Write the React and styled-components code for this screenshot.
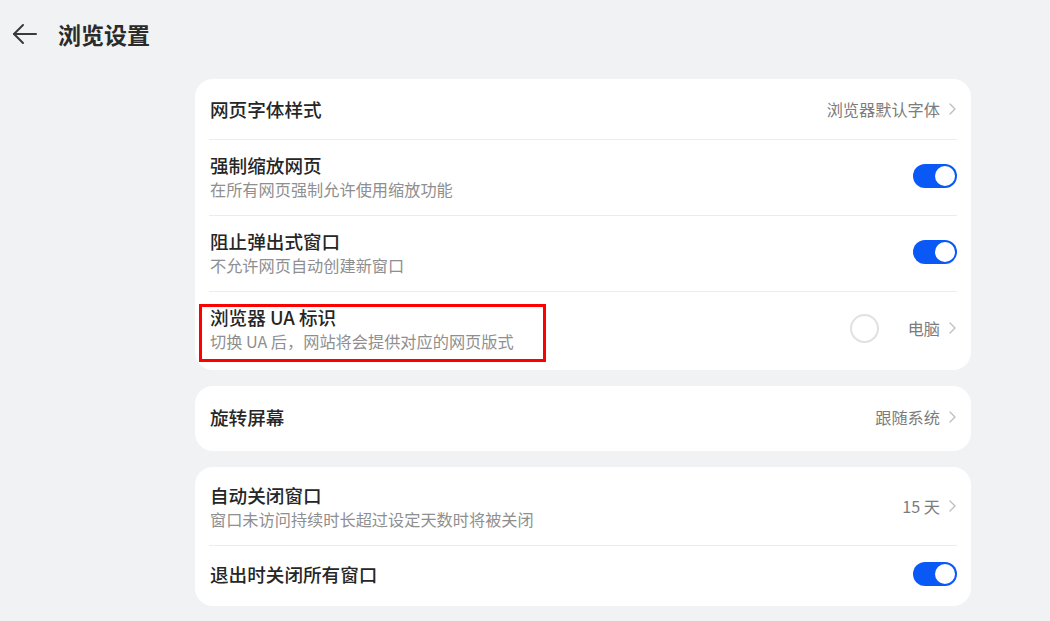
import React from "react";
import styled, { createGlobalStyle } from "styled-components";

const Global = createGlobalStyle`
  html, body { margin: 0; padding: 0; background: #f1f2f4; }
  body { font-family: "Noto Sans CJK SC", "Noto Sans", sans-serif; -webkit-font-smoothing: antialiased; }
`;

const Page = styled.div`
  width: 1050px;
  height: 621px;
  background: #f1f2f4;
  overflow: hidden;
`;

const Header = styled.div`
  display: flex;
  align-items: center;
  height: 68px;
  padding-left: 12px;
  gap: 20px;
`;

const BackBtn = styled.div`
  width: 26px;
  height: 26px;
  display: flex;
  align-items: center;
  justify-content: center;
  color: #3a3a3a;
`;

const Title = styled.h1`
  margin: 0;
  font-size: 23px;
  font-weight: 700;
  color: #2b2b2b;
`;

const Content = styled.div`
  display: flex;
  flex-direction: column;
  gap: 16px;
  width: 776px;
  margin-left: 195px;
  margin-top: 11px;
`;

const Card = styled.div`
  background: #ffffff;
  border-radius: 18px;
  padding: 2px 14px 3px;
`;

const Row = styled.div`
  position: relative;
  display: flex;
  align-items: center;
  justify-content: space-between;
  min-height: ${(p) => (p.$two ? "76px" : p.$tall ? "60px" : "58px")};
  padding: ${(p) => (p.$two ? "13px 0 16px" : "0 0 2px")};
  box-sizing: border-box;
  border-top: ${(p) => (p.$divider ? "1px solid #ececee" : "none")};
`;

const TextCol = styled.div`
  display: flex;
  flex-direction: column;
  padding-left: 1px;
`;

const RowTitle = styled.div`
  font-size: 18.6px;
  line-height: 24px;
  font-weight: 500;
  color: #262626;
`;

const RowSub = styled.div`
  margin-top: 2px;
  font-size: 16.2px;
  line-height: 20px;
  color: #8f8f8f;
`;

const Right = styled.div`
  display: flex;
  align-items: center;
  gap: 7px;
`;

const Value = styled.span`
  font-size: 16.2px;
  color: #7c7c7c;
`;

const Toggle = styled.div`
  width: 44px;
  height: 24px;
  border-radius: 12px;
  background: #0a59f7;
  position: relative;
  &::after {
    content: "";
    position: absolute;
    right: 2px;
    top: 2px;
    width: 20px;
    height: 20px;
    border-radius: 50%;
    background: #ffffff;
  }
`;

const Spinner = styled.div`
  width: 25px;
  height: 25px;
  border-radius: 50%;
  border: 2px solid #dfe1e4;
  margin-right: 22px;
`;

const Highlight = styled.div`
  position: absolute;
  left: -10px;
  top: 12px;
  width: 341px;
  height: 52px;
  border: 3px solid #ff0000;
  pointer-events: none;
`;

const Chevron = () => (
  <svg width="10" height="16" viewBox="0 0 10 16" fill="none">
    <polyline points="3,3 8,8 3,13" stroke="#bdbdbd" strokeWidth="1.3" strokeLinecap="round" strokeLinejoin="round" />
  </svg>
);

const Arrow = () => (
  <svg width="26" height="22" viewBox="0 0 26 22" fill="none">
    <line x1="2" y1="11" x2="24" y2="11" stroke="#3a3a3a" strokeWidth="2" strokeLinecap="round" />
    <polyline points="11,2 2,11 11,20" stroke="#3a3a3a" strokeWidth="2" strokeLinecap="round" strokeLinejoin="round" />
  </svg>
);

export default function App() {
  return (
    <Page>
      <Global />
      <Header>
        <BackBtn>
          <Arrow />
        </BackBtn>
        <Title>浏览设置</Title>
      </Header>
      <Content>
        <Card>
          <Row>
            <TextCol>
              <RowTitle>网页字体样式</RowTitle>
            </TextCol>
            <Right>
              <Value>浏览器默认字体</Value>
              <Chevron />
            </Right>
          </Row>
          <Row $two $divider>
            <TextCol>
              <RowTitle>强制缩放网页</RowTitle>
              <RowSub>在所有网页强制允许使用缩放功能</RowSub>
            </TextCol>
            <Toggle />
          </Row>
          <Row $two $divider>
            <TextCol>
              <RowTitle>阻止弹出式窗口</RowTitle>
              <RowSub>不允许网页自动创建新窗口</RowSub>
            </TextCol>
            <Toggle />
          </Row>
          <Row $two $divider>
            <TextCol>
              <RowTitle>浏览器 UA 标识</RowTitle>
              <RowSub>切换 UA 后，网站将会提供对应的网页版式</RowSub>
            </TextCol>
            <Right>
              <Spinner />
              <Value>电脑</Value>
              <Chevron />
            </Right>
            <Highlight />
          </Row>
        </Card>
        <Card>
          <Row $tall>
            <TextCol>
              <RowTitle>旋转屏幕</RowTitle>
            </TextCol>
            <Right>
              <Value>跟随系统</Value>
              <Chevron />
            </Right>
          </Row>
        </Card>
        <Card>
          <Row $two>
            <TextCol>
              <RowTitle>自动关闭窗口</RowTitle>
              <RowSub>窗口未访问持续时长超过设定天数时将被关闭</RowSub>
            </TextCol>
            <Right>
              <Value>15 天</Value>
              <Chevron />
            </Right>
          </Row>
          <Row $divider>
            <TextCol>
              <RowTitle>退出时关闭所有窗口</RowTitle>
            </TextCol>
            <Toggle />
          </Row>
        </Card>
      </Content>
    </Page>
  );
}
